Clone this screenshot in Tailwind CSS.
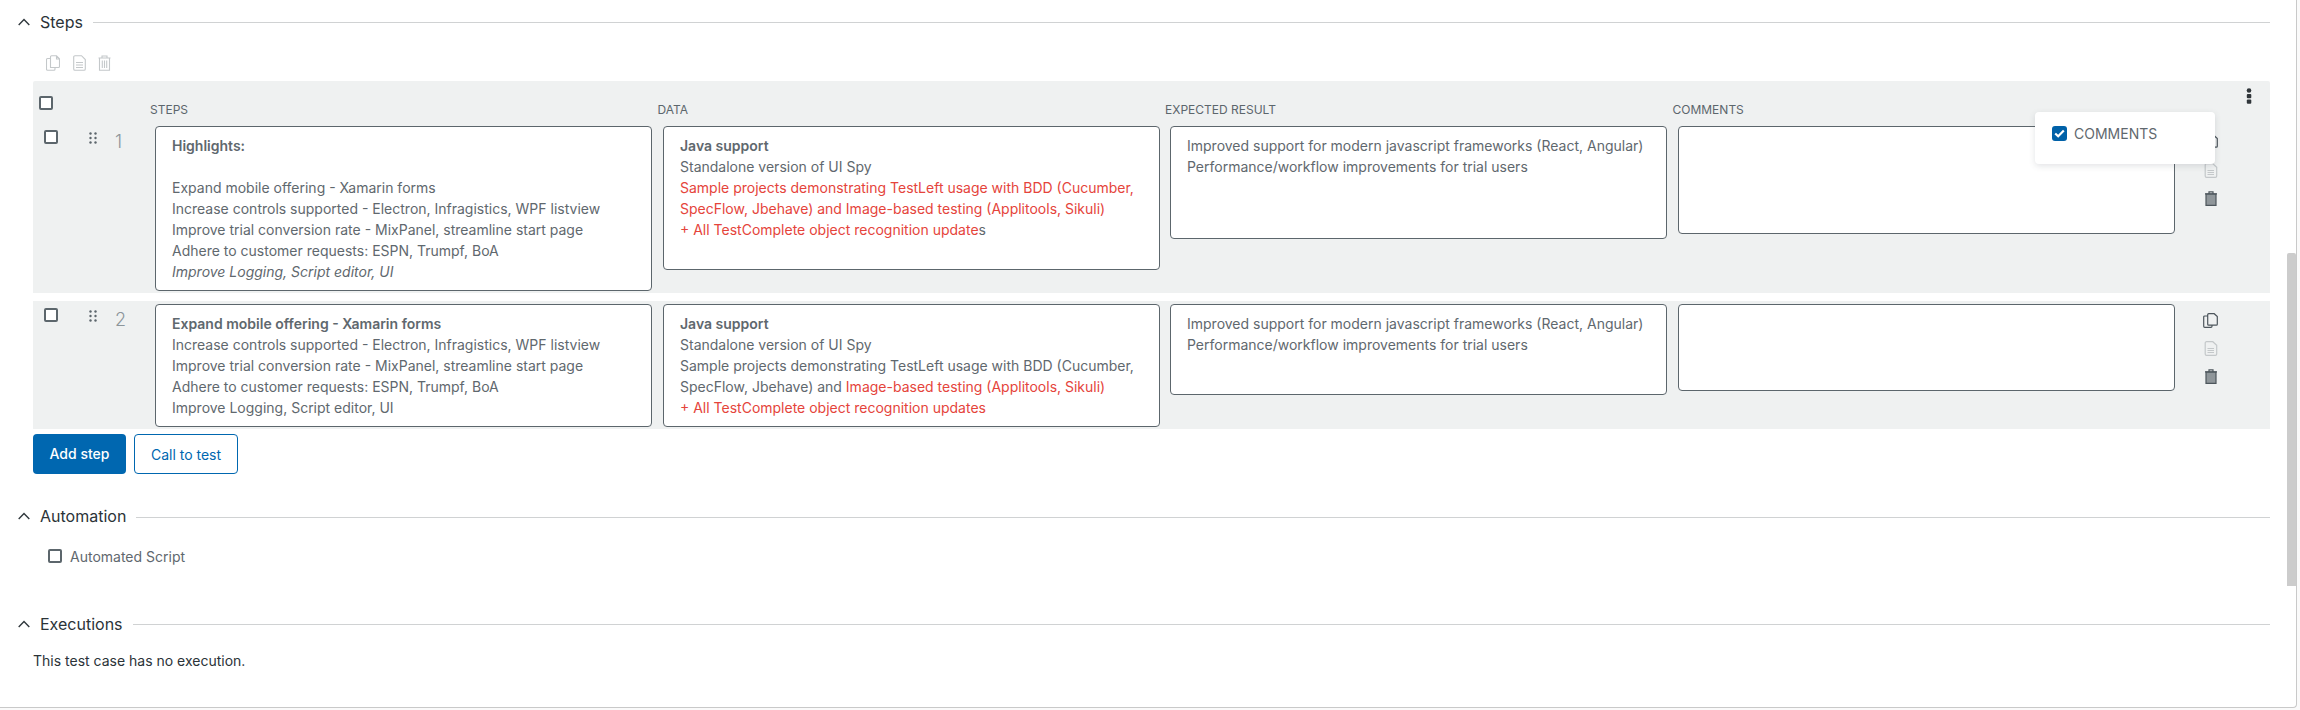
<!DOCTYPE html>
<html>
<head>
<meta charset="utf-8">
<script src="https://cdn.jsdelivr.net/npm/@tailwindcss/browser@4"></script>
</head>
<body class="bg-[#fafafa] font-['Inter','Liberation_Sans',sans-serif] overflow-hidden">
<div class="relative w-[2297px] h-[708px] overflow-hidden bg-white border-b border-r border-[#c9c9c9] rounded-br-[4px]">
  <div class="w-[2270px] pl-[18px]">
    <!-- Steps heading -->
    <div class="h-[44px] flex items-center gap-[10px]">
      <svg class="w-[12px] h-[8px] shrink-0" viewBox="0 0 12 8" fill="none" stroke="#30383d" stroke-width="1.4"><path d="M.7 7 6 1.500 11.300 7"/></svg>
      <span class="text-[16px] leading-none text-[#2b3338]">Steps</span>
      <div class="flex-1 h-px bg-[#d0d2d3]"></div>
    </div>
    <!-- Toolbar -->
    <div class="h-[37px] pl-[28px] flex items-start gap-[13px] pt-[11px] text-[#c4c8ca]">
      <svg class="w-[14px] h-[16px]" viewBox="0 0 14 16" fill="none" stroke="currentColor" stroke-width="1.100"><path d="M4.500 12.500V1.800a1 1 0 0 1 1-1h5l3 3v7.700a1 1 0 0 1-1 1ZM10.500 1v3h3M4.500 3.500H1.500a1 1 0 0 0-1 1v9.700a1 1 0 0 0 1 1h6.500a1 1 0 0 0 1-1v-1.700"/></svg>
      <svg class="w-[13px] h-[16px]" viewBox="0 0 13 16" fill="none" stroke="currentColor" stroke-width="1.100"><path d="M2 .7h6.500l3.800 3.800V14a1.300 1.300 0 0 1-1.300 1.300H2A1.300 1.300 0 0 1 .7 14V2A1.300 1.300 0 0 1 2 .7ZM3 7.500h7M3 10h7M3 12.500h7"/></svg>
      <svg class="w-[13px] h-[16px] ml-[-1px]" viewBox="0 0 13 16" fill="none" stroke="currentColor" stroke-width="1.100"><path d="M.5 3h12M4 3V1h5v2M1.500 3v12.300h10V3M4.300 5.500v7.500M6.500 5.500v7.500M8.700 5.500v7.500"/></svg>
    </div>
    <!-- Table -->
    <div class="ml-[15px] w-[2237px] h-[212px] bg-[#eff1f1] rounded-t-[2px] relative">
      <div class="h-[45px] relative">
        <div class="absolute left-[6px] top-[15px] w-[14px] h-[14px] border-2 border-[#5c666c] rounded-[2px] bg-white"></div>
        <div class="absolute left-[117px] top-[21px] grid grid-cols-[507.5px_507.5px_507.5px_507.5px] text-[12px] leading-[15px] text-[#5c666c]">
          <span>STEPS</span><span>DATA</span><span>EXPECTED RESULT</span><span>COMMENTS</span>
        </div>
        <svg class="absolute left-[2213px] top-[7px] w-[6px] h-[16px]" viewBox="0 0 6 16" fill="#30363a"><circle cx="3" cy="2.500" r="2.300"/><rect x=".8" y="6" width="4.500" height="4.300" rx="1"/><rect x=".8" y="11.500" width="4.500" height="4.300" rx="1"/></svg>
      </div>
      <div class="flex items-start text-[14px] leading-[21px] text-[#5f686e]">
        <div class="w-[122px] h-[30px] relative shrink-0">
          <div class="absolute left-[11px] top-[4px] w-[14px] h-[14px] border-2 border-[#5c666c] rounded-[2px] bg-white"></div>
          <svg class="absolute left-[56px] top-[6px] w-[8px] h-[12px]" viewBox="0 0 8 12" fill="#5c666c"><circle cx="1.500" cy="1.500" r="1.200"/><circle cx="6.500" cy="1.500" r="1.200"/><circle cx="1.500" cy="6" r="1.200"/><circle cx="6.500" cy="6" r="1.200"/><circle cx="1.500" cy="10.500" r="1.200"/><circle cx="6.500" cy="10.500" r="1.200"/></svg>
          <span class="absolute left-[82px] top-[5px] text-[18px] leading-[22px] text-[#8c959a] font-light">1</span>
        </div>
        <div class="w-[497px] h-[165px] shrink-0 bg-white border border-[#5c666c] rounded-[4px] pl-[16px] pr-2 pt-[8px]">
          <p class="font-semibold">Highlights:</p><p>&nbsp;</p>
          <p>Expand mobile offering - Xamarin forms</p>
          <p>Increase controls supported - Electron, Infragistics, WPF listview</p>
          <p>Improve trial conversion rate - MixPanel, streamline start page</p>
          <p>Adhere to customer requests: ESPN, Trumpf, BoA</p>
          <p class="italic">Improve Logging, Script editor, UI</p>
        </div>
        <div class="w-[497px] h-[144px] ml-[11px] shrink-0 bg-white border border-[#5c666c] rounded-[4px] pl-[16px] pr-2 pt-[8px]">
          <p class="font-semibold">Java support</p>
          <p>Standalone version of UI Spy</p>
          <p class="text-[#e5443b]">Sample projects demonstrating TestLeft usage with BDD (Cucumber, SpecFlow, Jbehave) and Image-based testing (Applitools, Sikuli)</p>
          <p class="text-[#e5443b]">+ All TestComplete object recognition update<span class="text-[#5f686e]">s</span></p>
        </div>
        <div class="w-[497px] h-[113px] ml-[10px] shrink-0 bg-white border border-[#5c666c] rounded-[4px] pl-[16px] pr-2 pt-[8px]">
          <p>Improved support for modern javascript frameworks (React, Angular)</p>
          <p>Performance/workflow improvements for trial users</p>
        </div>
        <div class="w-[497px] h-[108px] ml-[11px] shrink-0 bg-white border border-[#5c666c] rounded-[4px]"></div>
        <div class="ml-[28px] flex flex-col gap-[13px] pt-[9px]">
          <svg class="w-[15px] h-[15px]" viewBox="0 0 15 15" fill="none" stroke="#4d565c" stroke-width="1.200"><path d="M4.700 11.200V1.700a1 1 0 0 1 1-1h5.500l3.100 2.800v7.700a1 1 0 0 1-1 1H5.700a1 1 0 0 1-1-1ZM4.700 3H1.700a1 1 0 0 0-1 1v9.300a1 1 0 0 0 1 1h6.300a1 1 0 0 0 1-1v-1"/></svg>
          <svg class="w-[15px] h-[15px]" viewBox="0 0 15 15" fill="none" stroke="#c4c8ca" stroke-width="1.200"><path d="M3.500.7h6.300l3.900 3.600V13a1.300 1.300 0 0 1-1.300 1.300H3.500A1.300 1.300 0 0 1 2.200 13V2A1.300 1.300 0 0 1 3.500.7ZM4.500 7.500h6.500M4.500 9.500h6.500M4.500 11.500h6.500"/></svg>
          <svg class="w-[15px] h-[15px]" viewBox="0 0 15 15"><path d="M3 3h10v11.300H3Z" fill="#8f969a" stroke="#4d565c" stroke-width="1.200"/><path d="M2 2.800h12M6 2.500V.8h4v1.700" fill="none" stroke="#4d565c" stroke-width="1.200"/></svg>
        </div>
      </div>
    </div>
    <div class="ml-[15px] mt-[8px] w-[2237px] h-[128px] pt-[3px] bg-[#eff1f1] flex items-start text-[14px] leading-[21px] text-[#5f686e]">
      <div class="w-[122px] h-[30px] relative shrink-0">
        <div class="absolute left-[11px] top-[4px] w-[14px] h-[14px] border-2 border-[#5c666c] rounded-[2px] bg-white"></div>
        <svg class="absolute left-[56px] top-[6px] w-[8px] h-[12px]" viewBox="0 0 8 12" fill="#5c666c"><circle cx="1.500" cy="1.500" r="1.200"/><circle cx="6.500" cy="1.500" r="1.200"/><circle cx="1.500" cy="6" r="1.200"/><circle cx="6.500" cy="6" r="1.200"/><circle cx="1.500" cy="10.500" r="1.200"/><circle cx="6.500" cy="10.500" r="1.200"/></svg>
        <span class="absolute left-[82px] top-[5px] text-[18px] leading-[22px] text-[#8c959a] font-light">2</span>
      </div>
      <div class="w-[497px] h-[123px] shrink-0 bg-white border border-[#5c666c] rounded-[4px] pl-[16px] pr-2 pt-[8px]">
        <p class="font-semibold">Expand mobile offering - Xamarin forms</p>
        <p>Increase controls supported - Electron, Infragistics, WPF listview</p>
        <p>Improve trial conversion rate - MixPanel, streamline start page</p>
        <p>Adhere to customer requests: ESPN, Trumpf, BoA</p>
        <p>Improve Logging, Script editor, UI</p>
      </div>
      <div class="w-[497px] h-[123px] ml-[11px] shrink-0 bg-white border border-[#5c666c] rounded-[4px] pl-[16px] pr-2 pt-[8px]">
        <p class="font-semibold">Java support</p>
        <p>Standalone version of UI Spy</p>
        <p>Sample projects demonstrating TestLeft usage with BDD (Cucumber, SpecFlow, Jbehave) and <span class="text-[#e5443b]">Image-based testing (Applitools, Sikuli)</span></p>
        <p class="text-[#e5443b]">+ All TestComplete object recognition updates</p>
      </div>
      <div class="w-[497px] h-[91px] ml-[10px] shrink-0 bg-white border border-[#5c666c] rounded-[4px] pl-[16px] pr-2 pt-[8px]">
        <p>Improved support for modern javascript frameworks (React, Angular)</p>
        <p>Performance/workflow improvements for trial users</p>
      </div>
      <div class="w-[497px] h-[87px] ml-[11px] shrink-0 bg-white border border-[#5c666c] rounded-[4px]"></div>
      <div class="ml-[28px] flex flex-col gap-[13px] pt-[9px]">
        <svg class="w-[15px] h-[15px]" viewBox="0 0 15 15" fill="none" stroke="#4d565c" stroke-width="1.200"><path d="M4.700 11.200V1.700a1 1 0 0 1 1-1h5.500l3.100 2.800v7.700a1 1 0 0 1-1 1H5.700a1 1 0 0 1-1-1ZM4.700 3H1.700a1 1 0 0 0-1 1v9.300a1 1 0 0 0 1 1h6.300a1 1 0 0 0 1-1v-1"/></svg>
        <svg class="w-[15px] h-[15px]" viewBox="0 0 15 15" fill="none" stroke="#c4c8ca" stroke-width="1.200"><path d="M3.500.7h6.300l3.900 3.600V13a1.300 1.300 0 0 1-1.300 1.300H3.500A1.300 1.300 0 0 1 2.200 13V2A1.300 1.300 0 0 1 3.500.7ZM4.500 7.500h6.500M4.500 9.500h6.500M4.500 11.500h6.500"/></svg>
        <svg class="w-[15px] h-[15px]" viewBox="0 0 15 15"><path d="M3 3h10v11.300H3Z" fill="#8f969a" stroke="#4d565c" stroke-width="1.200"/><path d="M2 2.800h12M6 2.500V.8h4v1.700" fill="none" stroke="#4d565c" stroke-width="1.200"/></svg>
      </div>
    </div>
    <!-- Buttons -->
    <div class="ml-[15px] mt-[5px] flex gap-[8px] text-[14px]">
      <button class="w-[93px] h-[40px] rounded-[4px] bg-[#0067b0] text-white font-medium pb-[2px]">Add step</button>
      <button class="w-[104px] h-[40px] rounded-[4px] border border-[#0067b0] bg-white text-[#0067b0]">Call to test</button>
    </div>
    <!-- Automation -->
    <div class="mt-[25px] h-[34px] flex items-center gap-[10px]">
      <svg class="w-[12px] h-[8px] shrink-0" viewBox="0 0 12 8" fill="none" stroke="#30383d" stroke-width="1.4"><path d="M.7 7 6 1.500 11.300 7"/></svg>
      <span class="text-[16px] leading-none text-[#2b3338]">Automation</span>
      <div class="flex-1 h-px bg-[#d0d2d3] mt-[2px]"></div>
    </div>
    <div class="mt-[13px] h-[20px] pl-[30px] flex items-center gap-[8px] text-[14px] text-[#5f686e]">
      <div class="w-[14px] h-[14px] border-2 border-[#5c666c] rounded-[2px] bg-white"></div>
      <span>Automated Script</span>
    </div>
    <!-- Executions -->
    <div class="mt-[41px] h-[34px] flex items-center gap-[10px]">
      <svg class="w-[12px] h-[8px] shrink-0" viewBox="0 0 12 8" fill="none" stroke="#30383d" stroke-width="1.4"><path d="M.7 7 6 1.500 11.300 7"/></svg>
      <span class="text-[16px] leading-none text-[#2b3338]">Executions</span>
      <div class="flex-1 h-px bg-[#d0d2d3]"></div>
    </div>
    <p class="ml-[15px] mt-[10px] text-[14px] leading-[20px] text-[#2b3338]">This test case has no execution.</p>
    <div class="mt-[33px] h-[34px] flex items-center gap-[10px]">
      <span class="ml-[22px] text-[16px] leading-none text-[#2b3338]">Associated Objects</span>
    </div>
  </div>
  <!-- Popup -->
  <div class="absolute left-[2035px] top-[112px] w-[180px] h-[52px] bg-white rounded-[4px] shadow-[0_2px_6px_rgba(60,70,80,0.15)] flex items-start pl-[17px] pt-[14px] gap-[7px] text-[14px] leading-[16px] text-[#5f686e]">
    <div class="w-[15px] h-[15px] rounded-[3px] bg-[#0061a8] flex items-center justify-center">
      <svg class="w-[11px] h-[9px]" viewBox="0 0 11 9" fill="none" stroke="white" stroke-width="2.200"><path d="M1.200 4.500 4.200 7.300 9.800 1.500"/></svg>
    </div>
    <span>COMMENTS</span>
  </div>
  <!-- Scrollbar -->
  <div class="absolute left-[2287px] top-[253px] w-[9px] h-[333px] rounded-t-[2px] bg-[#cccccc]"></div>
</div>
</body>
</html>
